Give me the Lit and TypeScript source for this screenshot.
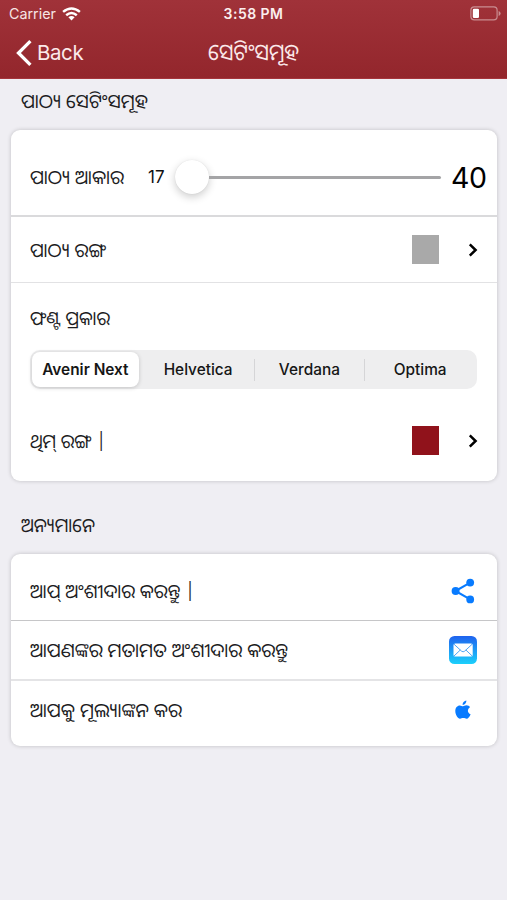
import { LitElement, html, css, svg } from "lit";
import { customElement, property } from "lit/decorators.js";

const chevron = html`<svg class="chev" width="12" height="16" viewBox="0 0 12 16">
  <path d="M2.8 2.4 L8.6 8 L2.8 13.6" fill="none" stroke="#000" stroke-width="2.5" /></svg>`;

const share = html`<svg width="24" height="26" viewBox="0 0 24 26">
  <path d="M19.2 4.6 L4.4 13 L19.2 21.4" fill="none" stroke="#087bff" stroke-width="2.1" />
  <circle cx="4.6" cy="13" r="4" fill="#087bff" /><circle cx="19.2" cy="4.6" r="3.9" fill="#087bff" />
  <circle cx="19.2" cy="21.4" r="3.9" fill="#087bff" /></svg>`;

const mail = html`<svg width="28" height="28" viewBox="0 0 28 28">
  <defs><linearGradient id="m" x1="0" y1="0" x2="0" y2="1">
    <stop offset="0" stop-color="#1f62ee" /><stop offset="1" stop-color="#1bd0fb" /></linearGradient></defs>
  <rect width="28" height="28" rx="5.5" fill="url(#m)" />
  <rect x="4.5" y="7.5" width="19.2" height="13" rx="1.6" fill="#fff" />
  <path d="M5 8.2 L12.6 15.2 Q14.1 16.4 15.6 15.2 L23.2 8.2 M5 20 L11.3 14 M23.2 20 L16.9 14" fill="none" stroke="#3c9bf3" stroke-width="0.9" /></svg>`;

const apple = html`<svg width="16" height="20" viewBox="0 0 16 20">
  <path fill="#087bff" d="M11.4 0.6 C11.6 2.9 9.8 5 7.6 4.9 C7.4 2.8 9.3 0.8 11.4 0.6 Z
  M8 6.3 C8.9 6.3 9.9 5.3 11.5 5.3 C13 5.3 14.3 6 15 7.2 C12 9 12.3 12.9 15.6 14.2 C14.8 16.4 13.2 18.8 11.6 18.8 C10.4 18.8 9.8 18.1 8.3 18.1 C6.8 18.1 6.2 18.8 5 18.8 C2.8 18.8 0.3 14.7 0.3 11 C0.3 7.6 2.3 5.4 4.8 5.4 C6.2 5.4 7.2 6.3 8 6.3 Z" /></svg>`;

const wifi = html`<svg width="19" height="14" viewBox="0 0 19 14" fill="none" stroke="#fff" stroke-width="2.5">
  <path d="M1.1 4.9 Q9.5 -2 17.9 4.9" /><path d="M4.2 8.2 Q9.5 3.8 14.8 8.2" />
  <path d="M6.4 10.3 Q9.5 7.8 12.6 10.3 L9.5 13.5 Z" fill="#fff" stroke="none" /></svg>`;

const battery = html`<svg width="31" height="15" viewBox="0 0 31 15">
  <rect x="0.9" y="0.9" width="26.2" height="13" rx="3.4" fill="none" stroke="#fff" stroke-opacity=".45" stroke-width="1.2" />
  <rect x="2.8" y="2.7" width="6.2" height="9.4" rx="1.3" fill="#fff" />
  <path d="M28.6 4.9 Q30.6 5.8 30.6 7.4 Q30.6 9 28.6 9.9 Z" fill="#fff" fill-opacity=".45" /></svg>`;

@customElement("fit-text")
class FitText extends LitElement {
  @property() text = "";
  @property({ type: Number }) w = 100;
  @property({ type: Number }) size = 19.5;
  static styles = css`
    :host { display: block; }
    svg { display: block; overflow: visible; }
    text { fill: currentColor; font-family: "Noto Sans Oriya", "Noto Sans", "Inter", sans-serif; }
  `;
  render() {
    return html`<svg width=${this.w} height="24">
      ${svg`<text x="0" y="19" font-size=${this.size} textLength=${this.w} lengthAdjust="spacingAndGlyphs">${this.text}</text>`}
    </svg>`;
  }
}

@customElement("app-root")
class AppRoot extends LitElement {
  static styles = css`
    * { box-sizing: border-box; }
    :host { display: block; height: 900px; background: #efeef3; color: #1c1c1e; font-family: Inter, sans-serif; overflow: hidden; }
    header { height: 79px; background: linear-gradient(#a03239, #93262c); border-bottom: 1px solid #a5353c; color: #fff; }
    .status { display: grid; grid-template-columns: 1fr auto 1fr; align-items: center; height: 27px; padding: 0 6px 0 9px; }
    .carrier { display: flex; align-items: center; gap: 6px; font-size: 14.3px; color: #f7e4e5; }
    .time { margin-right: 3px; font-weight: 600; font-size: 14px; letter-spacing: .45px; color: #fbeeee; }
    .batt { display: flex; justify-content: flex-end; }
    .nav { display: grid; grid-template-columns: 1fr auto 1fr; align-items: center; height: 51px; padding: 0 16px; color: #fbe9ea; }
    .back { display: flex; align-items: center; gap: 5px; font-size: 20.5px; letter-spacing: -.4px; }
    .label { height: 51px; padding: 10px 0 0 21px; }
    .label.second { height: 73px; padding-top: 32px; }
    .card { margin: 0 10px 0 11px; background: #fff; border-radius: 9px; box-shadow: 0 0 4px rgba(0,0,0,.2); }
    .row { display: flex; align-items: center; padding: 0 14px 0 19px; }
    .grow { flex: 1; }
    .size { height: 87px; padding: 9px 11px 0 19px; border-bottom: 2px solid #dadadc; }
    .min { margin-left: 24px; font-size: 17px; width: 27px; color: #111; }
    .slider { flex: 1; display: flex; align-items: center; }
    .thumb { width: 34px; height: 34px; border-radius: 50%; background: #fff; box-shadow: 0 3px 9px rgba(0,0,0,.2), 0 0 1px rgba(0,0,0,.12); }
    .track { flex: 1; height: 3px; background: #a4a4a6; border-radius: 0 2px 2px 0; }
    .max { margin-left: 10px; font-size: 28.5px; color: #000; width: 35px; letter-spacing: -.4px; }
    .color { height: 66px; border-bottom: 1px solid #e2e2e4; }
    .swatch { width: 27px; height: 29px; margin-right: 28px; }
    .gray { background: #a9a9a9; }
    .red { background: #90121b; }
    .chev { margin-right: 4px; }
    .fonts { padding: 23px 20px 0 19px; }
    .seg { display: grid; grid-template-columns: repeat(4, 1fr); align-items: center; height: 39px; margin-top: 20px; padding: 2px; border-radius: 10px; background: #eeeeef; font-size: 15.4px; font-weight: 500; color: #161616; }
    .opt { display: flex; align-items: center; justify-content: center; height: 22px; }
    .opt.div { border-left: 1px solid #d5d5d7; }
    .opt.on { height: 35px; margin-right: 4px; background: #fff; border-radius: 8px; font-weight: 600; box-shadow: 0 1px 4px rgba(0,0,0,.18); }
    .theme { height: 92px; padding-top: 11px; }
    .r1 { height: 67px; padding-top: 7px; border-bottom: 1px solid #c6c6c8; }
    .r2 { height: 60px; border-bottom: 2px solid #e4e4e6; }
    .r3 { height: 65px; padding-bottom: 7px; }
    .icon { width: 40px; display: flex; justify-content: center; }
  `;
  t(text: string, w: number, size = 19.5) {
    return html`<fit-text .text=${text} .w=${w} .size=${size}></fit-text>`;
  }
  render() {
    return html`
      <header>
        <div class="status">
          <div class="carrier">Carrier ${wifi}</div>
          <div class="time">3:58 PM</div>
          <div class="batt">${battery}</div>
        </div>
        <div class="nav">
          <div class="back">
            <svg width="16" height="26" viewBox="0 0 16 26"><path d="M14.4 1.2 L2.5 13 L14.4 24.8" fill="none" stroke="#fff" stroke-width="3.3" /></svg>
            <span>Back</span>
          </div>
          ${this.t("ସେଟିଂସମୂହ", 91, 23)}
          <div></div>
        </div>
      </header>
      <div class="label">${this.t("ପାଠ୍ୟ ସେଟିଂସମୂହ", 127)}</div>
      <section class="card">
        <div class="row size">
          ${this.t("ପାଠ୍ୟ ଆକାର", 94)}
          <div class="min">17</div>
          <div class="slider"><div class="thumb"></div><div class="track"></div></div>
          <div class="max">40</div>
        </div>
        <div class="row color">
          ${this.t("ପାଠ୍ୟ ରଙ୍ଗ", 76)}
          <div class="grow"></div><div class="swatch gray"></div>${chevron}
        </div>
        <div class="fonts">
          ${this.t("ଫଣ୍ଟ ପ୍ରକାର", 80)}
          <div class="seg">
            <div class="opt on">Avenir Next</div>
            <div class="opt">Helvetica</div>
            <div class="opt div">Verdana</div>
            <div class="opt div">Optima</div>
          </div>
        </div>
        <div class="row theme">
          ${this.t("ଥିମ୍ ରଙ୍ଗ |", 76)}
          <div class="grow"></div><div class="swatch red"></div>${chevron}
        </div>
      </section>
      <div class="label second">${this.t("ଅନ୍ୟମାନେ", 74)}</div>
      <section class="card">
        <div class="row r1">${this.t("ଆପ୍ ଅଂଶୀଦାର କରନ୍ତୁ |", 165)}<div class="grow"></div><div class="icon">${share}</div></div>
        <div class="row r2">${this.t("ଆପଣଙ୍କର ମତାମତ ଅଂଶୀଦାର କରନ୍ତୁ", 258)}<div class="grow"></div><div class="icon">${mail}</div></div>
        <div class="row r3">${this.t("ଆପକୁ ମୂଲ୍ୟାଙ୍କନ କର", 152)}<div class="grow"></div><div class="icon">${apple}</div></div>
      </section>
    `;
  }
}
